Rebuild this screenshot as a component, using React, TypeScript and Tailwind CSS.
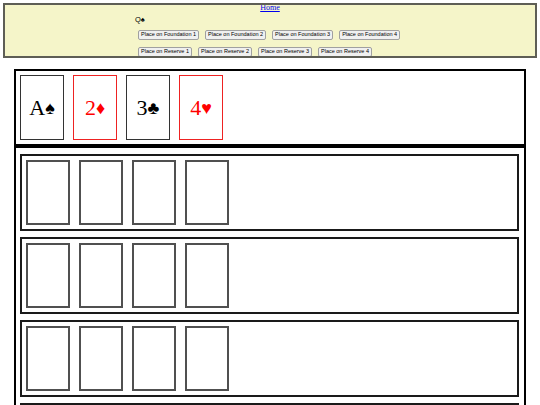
import React from "react";

type Card = { rank: string; suit: string; red: boolean };

const foundations: Card[] = [
  { rank: "A", suit: "♠", red: false },
  { rank: "2", suit: "♦", red: true },
  { rank: "3", suit: "♣", red: false },
  { rank: "4", suit: "♥", red: true },
];

const reserveRows = [0, 1, 2, 3];

function ActionButton({ label }: { label: string }) {
  return (
    <button className="h-[10px] px-[2px] flex items-center bg-[#f0f0f0] border border-[#a0a0a0] rounded-[2px] text-[5.5px] leading-none text-black font-['Liberation_Sans',Arial,sans-serif]">
      {label}
    </button>
  );
}

function FoundationCard({ card }: { card: Card }) {
  return (
    <div
      className={`w-[44px] h-[65px] flex items-center justify-center border bg-white text-[22px] leading-none font-['Liberation_Serif','DejaVu_Serif',serif] ${
        card.red ? "border-[#e22] text-[#f00]" : "border-[#333] text-black"
      }`}
    >
      {card.rank}
      <span className="text-[18px]">{card.suit}</span>
    </div>
  );
}

export default function App() {
  return (
    <div className="w-[540px] min-h-[405px] bg-white pt-[3px] overflow-hidden">
      {/* ── Controls header ── */}
      <div className="mx-[3px] h-[55px] border-2 border-[#5e5e55] bg-[#f5f5c9] box-border overflow-hidden">
        <div className="h-[6px] text-center text-[8px] leading-[6px] font-['Liberation_Serif',serif]">
          <a href="#" className="text-[#0000ee] underline">
            Home
          </a>
        </div>
        <div className="pl-[130px]">
          <div className="mt-[5px] h-[7px] text-[7.5px] leading-[7px] text-black font-['Liberation_Sans',Arial,sans-serif]">
            Q♠
          </div>
          <div className="mt-[7px] ml-[3px] flex gap-[6px]">
            <ActionButton label="Place on Foundation 1" />
            <ActionButton label="Place on Foundation 2" />
            <ActionButton label="Place on Foundation 3" />
            <ActionButton label="Place on Foundation 4" />
          </div>
          <div className="mt-[7px] ml-[3px] flex gap-[6px]">
            <ActionButton label="Place on Reserve 1" />
            <ActionButton label="Place on Reserve 2" />
            <ActionButton label="Place on Reserve 3" />
            <ActionButton label="Place on Reserve 4" />
          </div>
        </div>
      </div>

      {/* ── Board ── */}
      <div className="mt-[11px] ml-[14px] w-[512px] border-2 border-black">
        {/* Foundations */}
        <div className="px-[4px] pt-[4px] pb-[4px] flex gap-[9px] border-b-4 border-black">
          {foundations.map((c) => (
            <FoundationCard key={c.rank} card={c} />
          ))}
        </div>

        {/* Reserve rows */}
        <div className="pt-[6px] pl-[4px] pr-[5px] flex flex-col gap-[6px]">
          {reserveRows.map((r) => (
            <div key={r} className="border-2 border-[#1a1a1a] p-[4px] flex gap-[9px]">
              {[0, 1, 2, 3].map((i) => (
                <div
                  key={i}
                  className="w-[44px] h-[65px] border-2 border-[#505050] bg-white"
                />
              ))}
            </div>
          ))}
        </div>
      </div>
    </div>
  );
}
